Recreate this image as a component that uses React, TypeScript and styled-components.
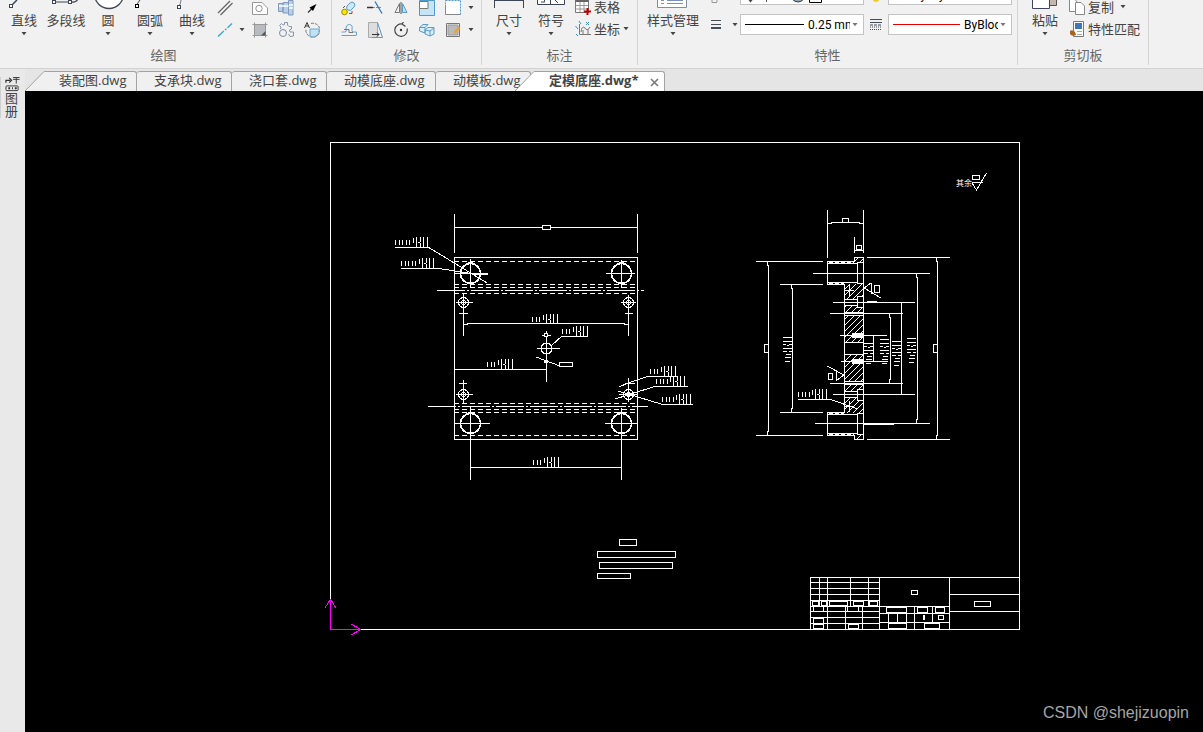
import React from 'react';
import styled, { createGlobalStyle, css } from 'styled-components';

const Global = createGlobalStyle`
  * { box-sizing: border-box; }
  body {
    margin: 0;
    background: #000;
    color: #444;
    font: 13px/16px "Open Sans", "Noto Sans CJK SC", sans-serif;
  }
  button, select { font: inherit; color: inherit; }
`;

const Page = styled.div`
  display: flex;
  flex-direction: column;
  min-height: 100vh;
`;

/* ---------- ribbon ---------- */

const Ribbon = styled.header`
  display: flex;
  align-items: flex-start;
  background: #f1f1f1;
  border-bottom: 1px solid #d2d2d2;
  height: 69px;
  overflow: hidden;
`;

const Group = styled.section<{ $w: number }>`
  flex: none;
  width: ${p => p.$w}px;
  height: 65px;
  border-right: 1px solid #d4d4d4;
`;

const GroupBody = styled.div<{ $pad: number }>`
  display: flex;
  height: 44px;
  padding-left: ${p => p.$pad}px;
`;

const GroupLabel = styled.h2<{ $end?: number }>`
  margin: 0;
  padding-right: ${p => p.$end ?? 0}px;
  font-size: 13px;
  font-weight: 400;
  line-height: 22px;
  text-align: center;
  color: #666;
`;

const bare = css`
  border: 0;
  padding: 0;
  background: none;
  display: flex;
  align-items: center;
  justify-content: center;
`;

const BigButton = styled.button<{ $w?: number }>`
  ${bare}
  width: ${p => p.$w ?? 42}px;
  flex-direction: column;
  justify-content: flex-start;
  white-space: nowrap;
  svg { flex: none; }
`;

const ArrowSlot = styled.span`
  display: flex;
  align-items: center;
  height: 12px;
`;

const ToolGrid = styled.div<{ $cols: string }>`
  display: grid;
  grid-template-columns: ${p => p.$cols};
  grid-template-rows: 16px 28px;
`;

const Tool = styled.button`
  ${bare}
`;

const RowTools = styled.div`
  display: grid;
  grid-template-rows: 14px 30px;
  padding-left: 3px;
`;

const RowButton = styled.button`
  ${bare}
  justify-content: flex-start;
  gap: 3px;
  line-height: 14px;
  white-space: nowrap;
`;

const PropGrid = styled.div`
  display: grid;
  grid-template-columns: 28px 10px 124px 24px 124px;
  grid-template-rows: 5px 21px;
  row-gap: 9px;
  justify-items: center;
`;

const Clip = styled.div`
  width: 100%;
  height: 5px;
  overflow: hidden;
  display: flex;
  flex-direction: column;
  justify-content: flex-end;
  align-items: center;
`;

const Combo = styled.label`
  flex: none;
  display: flex;
  align-items: center;
  width: 100%;
  height: 21px;
  padding: 0 5px 0 4px;
  border: 1px solid #c3c3c3;
  background: #fff;
  color: #000;
`;

const Rule = styled.span<{ $c: string; $w: number }>`
  width: ${p => p.$w}px;
  height: 1px;
  background: ${p => p.$c};
`;

const Select = styled.select<{ $w: number }>`
  appearance: none;
  width: ${p => p.$w}px;
  margin: 0 auto 0 4px;
  padding: 0;
  border: 0;
  background: none;
  color: #000;
  font: 12px/16px Roboto, "Noto Sans CJK SC", sans-serif;
  overflow: hidden;
`;

const Arrow = ({ c = '#444' }: { c?: string }) => (
  <svg width="6" height="4" viewBox="0 0 6 4"><path d="M.5 0H5.500L3 3.200Z" fill={c} /></svg>
);

const Ico = ({ children, h = 16 }: { children: React.ReactNode; h?: number }) => (
  <svg width="16" height={h} viewBox={`0 0 16 ${h}`} fill="none" stroke="#66707a">{children}</svg>
);

const Big = ({ label, w, arrow = true, children }: { label: string; w?: number; arrow?: boolean; children: React.ReactNode }) => (
  <BigButton $w={w}>
    <svg width="36" height="12" viewBox="0 0 36 12" fill="none" stroke="#3c4656">{children}</svg>
    <span>{label}</span>
    {arrow && <ArrowSlot><Arrow /></ArrowSlot>}
  </BigButton>
);

const DrawGroup = () => (
  <Group $w={332}>
    <GroupBody $pad={3}>
      <Big label="直线">
        <path d="M6 5L11 0" strokeWidth="1.5" /><rect x="3.5" y="4.5" width="3" height="3" fill="#fff" />
      </Big>
      <Big label="多段线" arrow={false}>
        <path d="M5 2H22Q28 3 30 -1M5 1L9 -2" strokeWidth="1.2" />
        <rect x="4.500" y=".5" width="3" height="3" fill="#fff" /><rect x="20.5" y=".5" width="3" height="3" fill="#fff" />
      </Big>
      <Big label="圆"><circle cx="19" cy="-6" r="14.500" fill="#fff" strokeWidth="1.3" /></Big>
      <Big label="圆弧">
        <path d="M5 5Q6 2 8 0" /><rect x="3.500" y="4.500" width="3" height="3" fill="#fff" stroke="#000" />
      </Big>
      <Big label="曲线">
        <path d="M5 6Q7 3 7 0" stroke="#778" /><rect x="3.500" y="5.500" width="3" height="3" fill="#fff" />
      </Big>
      <ToolGrid $cols="24px 10px 26px 26px 26px">
        <Tool aria-label="双线"><Ico><path d="M1 13L13 1M3.500 15L15.500 3" stroke="#666" strokeWidth="1.300" /></Ico></Tool>
        <span />
        <Tool aria-label="轮廓">
          <Ico><path d="M.5 2.500H10L15.500 8V14.500H.5Z" fill="#fff" stroke="#999" /><circle cx="7" cy="8.500" r="3.200" stroke="#8a93a0" /></Ico>
        </Tool>
        <Tool aria-label="轴">
          <Ico>
            <path d="M.5 3.500H5V11.500H.5ZM5 2.500H10.500V13H5ZM10.500 .5H15V15H10.500Z" fill="#b9cfe8" stroke="#7f9abc" />
            <path d="M1 6H10.500M11 5H15M11 8H15" stroke="#fff" strokeWidth="1.500" />
          </Ico>
        </Tool>
        <Tool aria-label="箭头">
          <Ico><path d="M4 12.500L9 7.500" stroke="#333" strokeWidth="1.200" /><path d="M12.500 4L5.500 7.500L9 11Z" fill="#000" stroke="none" /></Ico>
        </Tool>
        <Tool aria-label="构造线"><Ico><path d="M1 14.500L15 1.500" stroke="#2ea8d8" strokeWidth="1.300" strokeDasharray="8 1.500 2 1.500" /></Ico></Tool>
        <Tool aria-label="更多"><Arrow /></Tool>
        <Tool aria-label="填充">
          <Ico>
            <path d="M2.500 2.500H13.500V13.500H2.500Z" fill="#b8bcc0" stroke="#777" />
            <path d="M.5 2.500H15.500M.5 13.500H15.500M2.500 .5V15.500M13.500 .5V15.500" stroke="#999" />
            <path d="M13.500 9L9 13.500H13.500Z" fill="#555" stroke="none" />
          </Ico>
        </Tool>
        <Tool aria-label="齿轮">
          <Ico>
            <path d="M3 5L1.500 3.500L3.500 1.500L5 3L6.500 2.500V.5H9.500V3L11 4.500H13.500V7L11.500 8L12 10H15.500V14L12 14.500L10.500 12M3 5L2.500 7" stroke="#8a96a6" />
            <circle cx="5" cy="11" r="3.500" stroke="#7c8ca0" />
          </Ico>
        </Tool>
        <Tool aria-label="局部放大">
          <Ico>
            <path d="M7 1.500A7 7 0 1 1 2 7" stroke="#777" strokeDasharray="3 1" />
            <path d="M6 7H15V9A6 6 0 0 1 6 14Z" fill="#bfe3f6" stroke="#6aa9cc" />
            <path d="M.5 6L3 .5L5.500 6M1.500 4H4.500" stroke="#333" />
          </Ico>
        </Tool>
      </ToolGrid>
    </GroupBody>
    <GroupLabel $end={4}>绘图</GroupLabel>
  </Group>
);

const ModifyGroup = () => (
  <Group $w={150}>
    <GroupBody $pad={4}>
      <ToolGrid $cols="repeat(5, 26px) 10px">
        <Tool aria-label="复制对象">
          <Ico>
            <circle cx="3.500" cy="12" r="2.800" fill="#ffe600" stroke="#a08a00" />
            <path d="M6 6L9 3A2.500 2.500 0 0 1 13 7L11 9A2.500 2.500 0 0 1 6 6" fill="#cfe7f6" stroke="#5a9cc6" />
            <path d="M8 13.500H11V11" stroke="#b33" /><path d="M2 8L4 6" stroke="#555" />
          </Ico>
        </Tool>
        <Tool aria-label="修剪"><Ico><path d="M0 7.500H6" stroke="#333" strokeWidth="1.500" /><path d="M6 7.500H14" stroke="#5a9cc6" strokeDasharray="2 1" /><path d="M8 1.500L15 13.500" stroke="#2b7ab8" strokeWidth="1.300" /></Ico></Tool>
        <Tool aria-label="镜像"><Ico><path d="M6.500 3.500V12.500H2Z" stroke="#777" /><path d="M9.500 3.500V12.500H14Z" fill="#bfe0f5" stroke="#5a9cc6" /><path d="M8 2V14" stroke="#555" /></Ico></Tool>
        <Tool aria-label="缩放"><Ico><path d="M.5 .5H15.500V15.500H.5Z" fill="#c4e4f8" stroke="#4f9bca" /><path d="M.5 1.500H9V8.500H.5Z" fill="#fff" stroke="#777" /></Ico></Tool>
        <Tool aria-label="拉伸"><Ico><path d="M.5 .5H15.500V14.500H.5Z" fill="#fff" stroke="#4f9bca" strokeDasharray="2 1" /><path d="M.5 14.500H15.500M.5 5V14.500" stroke="#888" /></Ico></Tool>
        <Tool aria-label="更多"><Arrow /></Tool>
        <Tool aria-label="偏移"><Ico><path d="M.5 13.500H15.500M.5 10H4Q6 10 5 7Q5 2.500 8.500 2.500Q12 3 11 7Q10.500 10 12 10H15.500V13" stroke="#6aa0c8" /><path d="M3 7.500H8V10.500H12" stroke="#777" /></Ico></Tool>
        <Tool aria-label="拔模"><Ico><path d="M1.500 .5H10.500V15.500H1.500Z" fill="#ddd" stroke="#aaa" /><path d="M10.500 .5L15.500 15.500H5" stroke="#4f9bca" /><path d="M5 12.500H12M10 10.500L12 12.500L10 14.500" stroke="#333" /></Ico></Tool>
        <Tool aria-label="旋转"><Ico><path d="M10 2.300A6.200 6.200 0 1 0 14 6.500M12.500 4.500L9 2L10.500 0" stroke="#444" strokeWidth="1.200" /><circle cx="8" cy="8" r="1.200" fill="#333" stroke="none" /></Ico></Tool>
        <Tool aria-label="三维阵列"><Ico><path d="M.5 5.500L4 2.500H9L6 5.500V11L.5 9ZM6 5.500L.5 5.500M6 8L9 5.500H15V12L11 14L6 12ZM6 8L11 9V14M11 9L15 6" fill="#d9edf8" stroke="#5a9cc6" /></Ico></Tool>
        <Tool aria-label="编辑填充"><Ico><path d="M1.500 1.500H14.500V14.500H1.500Z" stroke="#777" /><path d="M3 3H13V13H3Z" fill="#bbb" stroke="#999" /><path d="M9 11L14.500 5.500" stroke="#e8a63a" strokeWidth="2.500" /></Ico></Tool>
        <Tool aria-label="更多"><Arrow /></Tool>
      </ToolGrid>
    </GroupBody>
    <GroupLabel>修改</GroupLabel>
  </Group>
);

const AnnotateGroup = () => (
  <Group $w={156}>
    <GroupBody $pad={6}>
      <Big label="尺寸"><path d="M3.500 0V8M32.500 0V8M4 .5H32" /></Big>
      <Big label="符号"><path d="M4.500 -4H31.500V4.500H4.500ZM17.500 0V4M11.500 0V1.500M8 2H12M22 0L25 3" fill="#fff" /></Big>
      <RowTools>
        <RowButton>
          <Ico>
            <path d="M.5 .5H13.500V13.500H.5Z" fill="#fff" stroke="#777" /><path d="M.5 1.500H13.500" stroke="#666" strokeWidth="3" />
            <path d="M.5 6.500H13M.5 10H13M5 3V13M9 3V13" stroke="#999" /><path d="M12.500 9V16M9 12.500H16" stroke="#c00000" strokeWidth="2" />
          </Ico>表格
        </RowButton>
        <RowButton>
          <Ico><path d="M4.500 3V13.500H16M6 11Q7 4 10 7Q12 11 15 6M8 9V13M13 8V13" stroke="#777" /><path d="M4 0L6 3M11 1L14 4M14 1L11 4M.5 5L3 8M1 13L3 15" stroke="#3b8ec8" /></Ico>坐标<Arrow />
        </RowButton>
      </RowTools>
    </GroupBody>
    <GroupLabel>标注</GroupLabel>
  </Group>
);

const PropertyGroup = () => (
  <Group $w={380}>
    <GroupBody $pad={6}>
      <Big label="样式管理" w={58}><path d="M2.500 -4H31.500V7.500H2.500Z" fill="#fff" stroke="#7d8ea6" /><path d="M6 3.500H9M12 3.500H28M6 .5H9M12 .5H28" stroke="#7d8ec0" /></Big>
      <PropGrid>
        <Clip><Ico h={5}><path d="M4 0V2.500H9M9 0V2" stroke="#999" /></Ico></Clip>
        <span />
        <Clip>
          <Combo>
            <svg width="80" height="19" viewBox="0 0 80 19" fill="none" stroke="#333">
              <path d="M3 14.500H8L5.500 17.500Z" fill="#444" stroke="none" /><path d="M17 14V15M21.500 14V17M26 14V15" stroke="#555" />
              <path d="M47 14Q53 20 59 14Z" fill="#9ab" /><path d="M64.500 8H76.500V17.500H64.500Z" stroke="#000" />
            </svg>
          </Combo>
        </Clip>
        <Clip><svg width="10" height="5" viewBox="0 0 10 5"><path d="M1 -2H9Q8 2 5 2Q2 2 1 -2Z" fill="#f0cf20" /></svg></Clip>
        <Clip>
          <Combo aria-label="图层线型"><Rule $c="#fff" $w={16} /><Select $w={60}><option>ByLayer</option></Select></Combo>
        </Clip>
        <Tool aria-label="线宽"><svg width="10" height="9" viewBox="0 0 10 9" fill="#444c58"><path d="M0 0H10V1H0ZM0 4H10V5H0ZM0 7H10V9H0Z" /></svg></Tool>
        <Tool aria-label="更多"><Arrow /></Tool>
        <Combo aria-label="线宽">
          <Rule $c="#000" $w={59} /><Select $w={42}><option>0.25 mm</option></Select><Arrow c="#777" />
        </Combo>
        <Tool aria-label="线型">
          <svg width="12" height="11" viewBox="0 0 12 11" stroke="#444c58"><path d="M0 .5H12M0 3.500H12" /><path d="M0 6H12" strokeDasharray="3 1" /><path d="M0 8H12M0 10.500H12" strokeDasharray="1 1" /></svg>
        </Tool>
        <Combo aria-label="线型">
          <Rule $c="#e60000" $w={67} /><Select $w={34}><option>ByBlock</option></Select><Arrow c="#777" />
        </Combo>
      </PropGrid>
    </GroupBody>
    <GroupLabel>特性</GroupLabel>
  </Group>
);

const ClipboardGroup = () => (
  <Group $w={131}>
    <GroupBody $pad={6}>
      <Big label="粘贴"><path d="M22 -4H29.500V5.500H22Z" fill="#c3b8ad" stroke="#5a5048" /><path d="M5.500 -4H22.500V8.500H5.500Z" fill="#fff" /></Big>
      <RowTools>
        <RowButton>
          <Ico><path d="M.5 .5H6L9 4V12.500H.5Z" fill="#fff" stroke="#888" /><path d="M6.500 3.500H12L15.500 7V15.500H6.500Z" fill="#fff" stroke="#888" /></Ico>复制&nbsp;<Arrow />
        </RowButton>
        <RowButton>
          <Ico>
            <path d="M4.500 .5H14.500V15.500H4.500Z" fill="#fff" stroke="#777" /><path d="M6 2H13V8H6Z" fill="#3f78b5" stroke="none" />
            <path d="M8 10.500H13M8 13.500H13" stroke="#aaa" /><path d="M1 10Q3 8 6 11L7 14Q3 16 1 13Z" fill="#a8621c" stroke="none" />
          </Ico>特性匹配
        </RowButton>
      </RowTools>
    </GroupBody>
    <GroupLabel>剪切板</GroupLabel>
  </Group>
);

/* ---------- workspace ---------- */

const Workspace = styled.div`
  flex: 1;
  display: flex;
`;

const Side = styled.aside`
  flex: none;
  width: 25px;
  padding-top: 8px;
  background: #e9e9e9;
`;

const SideTab = styled.button`
  border: 0;
  border-left: 1px solid #cfcfcf;
  padding: 0 0 0 4px;
  background: none;
  display: flex;
  flex-direction: column;
  height: 41px;
  span { width: 13px; line-height: 13px; word-break: break-all; text-align: left; }
`;

const Main = styled.div`
  flex: 1;
  min-width: 0;
  display: flex;
  flex-direction: column;
`;

const TabBar = styled.nav`
  display: flex;
  align-items: flex-end;
  height: 22px;
  background: #e5e5e5;
`;

const Slant = styled.svg<{ $over?: boolean }>`
  flex: none;
  position: relative;
  ${p => p.$over && 'margin-left: -16px;'}
`;

const Tab = styled.button<{ $w: number; $first?: boolean; $active?: boolean }>`
  flex: none;
  width: ${p => p.$w}px;
  height: 20px;
  padding: 0 0 3px ${p => (p.$first || p.$active ? 14 : 17)}px;
  border: 1px solid #a3a3a3;
  border-width: 1px 1px 0 0;
  border-radius: ${p => (p.$first || p.$active ? '0 3px 0 0' : '3px 3px 0 0')};
  background: ${p => (p.$active ? '#fff' : '#f0f0f0')};
  font-weight: ${p => (p.$active ? 700 : 400)};
  display: flex;
  align-items: center;
  justify-content: space-between;
  text-align: left;
  white-space: nowrap;
`;

const CloseX = styled.svg`
  margin: 4px 5px 0 0;
`;

const Canvas = styled.main`
  flex: 1;
  position: relative;
  background: #000;
  svg { position: absolute; inset: 0; width: 100%; height: 100%; }
`;

const Watermark = styled.span`
  position: absolute;
  right: 14px;
  bottom: 9px;
  font: 16px/20px "Liberation Sans", Arial, sans-serif;
  color: #a6a6a6;
`;

const SlantEdge = ({ over, fill }: { over?: boolean; fill: string }) => (
  <Slant $over={over} width="20" height="20" viewBox="0 0 20 20">
    <path d="M0 20L19 .5H20V20Z" fill={fill} /><path d="M0 20L19 .5H20" fill="none" stroke="#a3a3a3" />
  </Slant>
);

/* ---------- drawing ---------- */

type Seg = [number, number, number];
const hs = (a: Seg[]) => a.map(([y, x1, x2]) => `M${x1} ${y}H${x2 + 1}`).join('');
const vs = (a: Seg[]) => a.map(([x, y1, y2]) => `M${x} ${y1}V${y2 + 1}`).join('');

const HLines = ({ d, dash }: { d: Seg[]; dash?: string }) => <path d={hs(d)} transform="translate(0 .5)" strokeDasharray={dash} />;
const VLines = ({ d }: { d: Seg[] }) => <path d={vs(d)} transform="translate(.5 0)" />;

const Boxes = ({ d, fill = '#000' }: { d: [number, number, number, number][]; fill?: string }) => (
  <g transform="translate(.5 .5)" fill={fill}>
    {d.map(([x1, y1, x2, y2], i) => <rect key={i} x={x1} y={y1} width={x2 - x1} height={y2 - y1} />)}
  </g>
);

/* Dimension figure: short ticks followed by tall strokes, one of them broken. */
const Figure = ({ x, y, short, tall = 5 }: { x: number; y: number; short: number; tall?: number }) => {
  const segs: Seg[] = [];
  for (let i = 0; i < short; i++) segs.push([x + Math.round(i * 3.5), y + 3, y + 7]);
  const tx = x + Math.round(short * 3.5);
  for (let i = 0; i < tall; i++) {
    const px = tx + Math.round(i * 3.4);
    if (i === 0) segs.push([px, y + 1, y + 5]);
    else if (i === 2) segs.push([px, y, y + 4], [px, y + 6, y + 9]);
    else segs.push([px, y, y + 9]);
  }
  return <><VLines d={segs} /><HLines d={[[y + 5, tx + 5, tx + 6]]} /></>;
};

/* The same figure for a vertical dimension. */
const SideFigure = ({ x, y, skip = 0 }: { x: number; y: number; skip?: number }) => {
  const long: Seg[] = [0, 4, 11].filter(v => v >= skip).map(v => [y + v, x, x + 8]);
  return (
    <HLines d={[...long, [y + 7, x, x + 2], [y + 7, x + 6, x + 8], [y + 8, x + 4, x + 5], [y + 14, x, x + 3], [y + 14, x + 6, x + 8], [y + 17, x + 3, x + 7], [y + 20, x + 2, x + 7], [y + 24, x + 2, x + 6]]} />
  );
};

const BigHole = ({ x, y }: { x: number; y: number }) => (
  <g>
    <circle cx={x + .5} cy={y + .5} r="10" strokeWidth="1.500" />
    <rect x={x - 2} y={y - 11} width="5" height="2" fill="#fff" stroke="none" />
    <rect x={x - 2} y={y + 9} width="5" height="2" fill="#fff" stroke="none" />
  </g>
);

const SmallHole = ({ x, y }: { x: number; y: number }) => (
  <g>
    <circle cx={x + .5} cy={y + .5} r="5" /><circle cx={x + .5} cy={y + .5} r="2" />
  </g>
);

const FrontView = () => (
  <g>
    <Boxes d={[[454, 257, 637, 439]]} fill="none" />
    <HLines dash="5 3" d={[[261, 454, 637], [284, 454, 637], [287, 454, 637], [293, 454, 637], [403, 454, 637], [409, 454, 637], [412, 454, 637], [435, 454, 637]]} />
    <HLines dash="28 2 2 2" d={[[290, 437, 643], [406, 428, 647]]} />
    <HLines d={[
      [227, 454, 637], [247, 395, 428], [268, 401, 436], [273, 455, 487], [274, 478, 487], [273, 606, 634], [302, 456, 472], [302, 621, 635],
      [313, 459, 467], [313, 625, 632], [324, 463, 467], [323, 467, 624], [324, 624, 628], [335, 542, 550], [336, 562, 587],
      [348, 537, 559], [369, 454, 546], [376, 649, 676], [383, 459, 466], [383, 625, 634], [386, 656, 687], [394, 456, 472], [394, 619, 636],
      [404, 661, 692], [423, 455, 489], [423, 605, 636], [467, 470, 621],
    ]} />
    <VLines d={[
      [454, 214, 252], [637, 214, 252], [470, 259, 287], [621, 260, 287], [463, 294, 335], [628, 295, 335], [546, 331, 381],
      [463, 380, 402], [628, 378, 401], [470, 406, 479], [621, 408, 479],
    ]} />
    <Boxes d={[[542, 225, 550, 229], [559, 362, 572, 366], [544, 333, 547, 336]]} />
    <BigHole x={470} y={273} /><BigHole x={621} y={273} /><BigHole x={470} y={423} /><BigHole x={621} y={423} />
    <SmallHole x={463} y={302} /><SmallHole x={628} y={302} /><SmallHole x={463} y={394} /><SmallHole x={628} y={394} />
    <circle cx="546.500" cy="348.500" r="5.500" />
    <rect x="544" y="360" width="4" height="3" fill="#fff" stroke="none" />
    <rect x="626" y="393" width="8" height="3" fill="#fff" stroke="none" />
    <path d="M428 247L487 283M436 268L480 275M552 345L562 336M536 357L560 366M649 376L628 383L619 387M656 386L628 395L615 399M661 404L628 394L618 391" />
    <Figure x={395} y={237} short={5} /><Figure x={401} y={258} short={5} />
    <Figure x={532} y={314} short={3} /><Figure x={562} y={326} short={3} /><Figure x={487} y={359} short={3} />
    <Figure x={650} y={366} short={3} /><Figure x={656} y={376} short={4} /><Figure x={662} y={394} short={4} />
    <Figure x={533} y={457} short={3} />
  </g>
);

const SideView = () => (
  <g>
    <g fill="url(#hatch)" stroke="none">
      <rect x="855" y="258" width="8" height="4" /><rect x="845" y="284" width="18" height="15" />
      <rect x="845" y="306" width="18" height="6" /><rect x="845" y="316" width="18" height="26" />
      <rect x="845" y="355" width="18" height="26" /><rect x="845" y="385" width="18" height="6" />
      <rect x="845" y="398" width="18" height="15" /><rect x="855" y="435" width="8" height="4" />
    </g>
    <Boxes d={[[857, 296, 863, 307], [857, 389, 863, 400]]} />
    <HLines dash="4 2" d={[[262, 829, 853], [283, 829, 843], [413, 829, 843], [434, 829, 853]]} />
    <HLines d={[
      [223, 827, 831], [222, 831, 859], [223, 859, 863], [250, 854, 863], [257, 867, 949], [261, 756, 822], [284, 780, 822], [273, 813, 929],
      [302, 833, 914], [313, 830, 902], [335, 840, 886], [361, 841, 887], [383, 830, 902], [394, 833, 914], [412, 780, 822],
      [423, 815, 929], [424, 863, 893], [435, 756, 822], [439, 867, 949], [399, 798, 829], [301, 867, 876],
      [257, 854, 863], [261, 827, 854], [262, 857, 863], [263, 827, 857], [282, 827, 857], [283, 857, 863], [284, 827, 844],
      [299, 844, 857], [305, 844, 857], [312, 844, 863], [315, 844, 863], [342, 844, 863], [354, 844, 863], [381, 844, 863], [384, 844, 863],
      [391, 844, 857], [397, 844, 857], [412, 827, 844], [413, 857, 863], [414, 827, 857], [433, 827, 857], [434, 857, 863], [435, 827, 854], [439, 854, 863],
    ]} />
    <VLines d={[
      [827, 210, 257], [863, 210, 252], [854, 237, 252], [863, 257, 439], [854, 257, 261], [854, 435, 439],
      [827, 261, 284], [827, 412, 435], [844, 284, 412], [857, 262, 283], [857, 413, 434],
      [767, 261, 265], [768, 265, 431], [767, 431, 435], [791, 284, 288], [792, 288, 408], [791, 408, 412],
      [936, 257, 261], [937, 261, 435], [936, 435, 439], [916, 273, 277], [917, 277, 419], [916, 419, 423],
      [901, 302, 394], [889, 313, 317], [890, 317, 379], [889, 379, 383], [873, 335, 361],
      [871, 283, 293], [836, 371, 380], [849, 285, 295], [849, 401, 411],
    ]} />
    <HLines d={[[290, 845, 853], [406, 845, 853]]} />
    <Boxes d={[[842, 218, 848, 222], [856, 245, 861, 249], [764, 344, 768, 352], [933, 344, 937, 352], [874, 285, 879, 292], [828, 373, 832, 379]]} />
    <rect x="852" y="333" width="11" height="5" fill="#fff" stroke="none" /><rect x="852" y="359" width="11" height="5" fill="#fff" stroke="none" />
    <path d="M864 288L871 283M864 288L881 298M827 366L844 375L837 380M829 399L858 409" />
    <Figure x={798} y={389} short={4} />
    <SideFigure x={783} y={337} /><SideFigure x={864} y={339} skip={1} /><SideFigure x={880} y={339} /><SideFigure x={892} y={341} /><SideFigure x={907} y={338} />
  </g>
);

const TitleBlock = () => (
  <g>
    <HLines d={[
      [577, 810, 1019], [582, 810, 879], [588, 810, 879], [594, 810, 879], [600, 810, 879], [606, 810, 879], [611, 810, 879], [617, 810, 879], [623, 810, 879],
      [606, 879, 949], [613, 879, 949], [622, 879, 949], [594, 949, 1019], [611, 949, 1019],
    ]} />
    <VLines d={[
      [810, 577, 629], [879, 577, 629], [949, 577, 629], [819, 577, 606], [827, 577, 629], [850, 577, 606], [868, 577, 606], [845, 606, 629], [862, 606, 629],
      [888, 613, 629], [897, 613, 622], [906, 613, 629], [914, 606, 629], [932, 606, 622], [923, 615, 619], [924, 615, 619],
    ]} />
    <Boxes d={[
      [812, 601, 818, 605], [821, 601, 826, 605], [829, 601, 847, 605], [853, 601, 863, 605], [869, 601, 877, 605],
      [813, 606, 823, 611], [847, 606, 858, 611], [813, 618, 823, 623], [813, 624, 823, 628], [848, 624, 858, 628],
      [886, 607, 906, 612], [917, 607, 927, 612], [935, 607, 944, 612], [888, 623, 906, 628], [924, 623, 939, 628],
      [911, 590, 917, 594], [938, 615, 943, 619], [974, 601, 990, 606],
    ]} />
  </g>
);

const Notes = () => (
  <g>
    <Boxes d={[[619, 539, 636, 545], [597, 551, 675, 557], [599, 562, 672, 568], [597, 573, 630, 578], [972, 175, 979, 179]]} />
    <path d="M972 182.500H983M972 183L976.500 190L986.500 173" />
    <text x="956" y="186" fontSize="8" fill="#fff" stroke="none" fontFamily='"Noto Sans CJK SC", sans-serif'>其余</text>
  </g>
);

const Drawing = () => (
  <svg shapeRendering="crispEdges" fill="none" stroke="#fff">
    <defs>
      <pattern id="hatch" width="6" height="6" patternUnits="userSpaceOnUse">
        <path d="M0 6L6 0M-1 1L1 -1M5 7L7 5" stroke="#fff" />
      </pattern>
    </defs>
    <g transform="translate(-25 -91)">
      <Boxes d={[[330, 142, 1019, 629]]} fill="none" />
      <FrontView /><SideView /><Notes /><TitleBlock />
      <g stroke="#f0f">
        <path d="M330.500 600V629.500H361M330.500 599L325 608M330.500 599L336 608M361 629.500L351 624M361 629.500L351 635" />
      </g>
    </g>
  </svg>
);

const tabs = [
  { name: '支承块.dwg', w: 95 },
  { name: '浇口套.dwg', w: 95 },
  { name: '动模底座.dwg', w: 109 },
  { name: '动模板.dwg', w: 95 },
];

export default function App() {
  return (
    <Page>
      <Global />
      <Ribbon>
        <DrawGroup /><ModifyGroup /><AnnotateGroup /><PropertyGroup /><ClipboardGroup />
      </Ribbon>
      <Workspace>
        <Side>
          <SideTab>
            <svg width="15" height="16" viewBox="0 0 15 16" fill="none" stroke="#333">
              <path d="M.5 6V3.500H5M4 1L6.500 3.500L4 6" strokeWidth="1.300" /><path d="M8 .5H15M8 2.500H15M11.500 1V7" />
              <rect x=".5" y="9.500" width="13" height="5" rx="1" /><path d="M3 12H5M7 12H8M10 12H12" strokeWidth="2" />
            </svg>
            <span>图册</span>
          </SideTab>
        </Side>
        <Main>
          <TabBar>
            <SlantEdge fill="#f0f0f0" />
            <Tab $w={92} $first>装配图.dwg</Tab>
            {tabs.map(t => <Tab key={t.name} $w={t.w}>{t.name}</Tab>)}
            <SlantEdge over fill="#fff" />
            <Tab $w={130} $active>
              定模底座.dwg*
              <CloseX width="9" height="9" viewBox="0 0 9 9" stroke="#777" strokeWidth="1.600"><path d="M1 1L8 8M8 1L1 8" /></CloseX>
            </Tab>
          </TabBar>
          <Canvas>
            <Drawing />
            <Watermark>CSDN @shejizuopin</Watermark>
          </Canvas>
        </Main>
      </Workspace>
    </Page>
  );
}
